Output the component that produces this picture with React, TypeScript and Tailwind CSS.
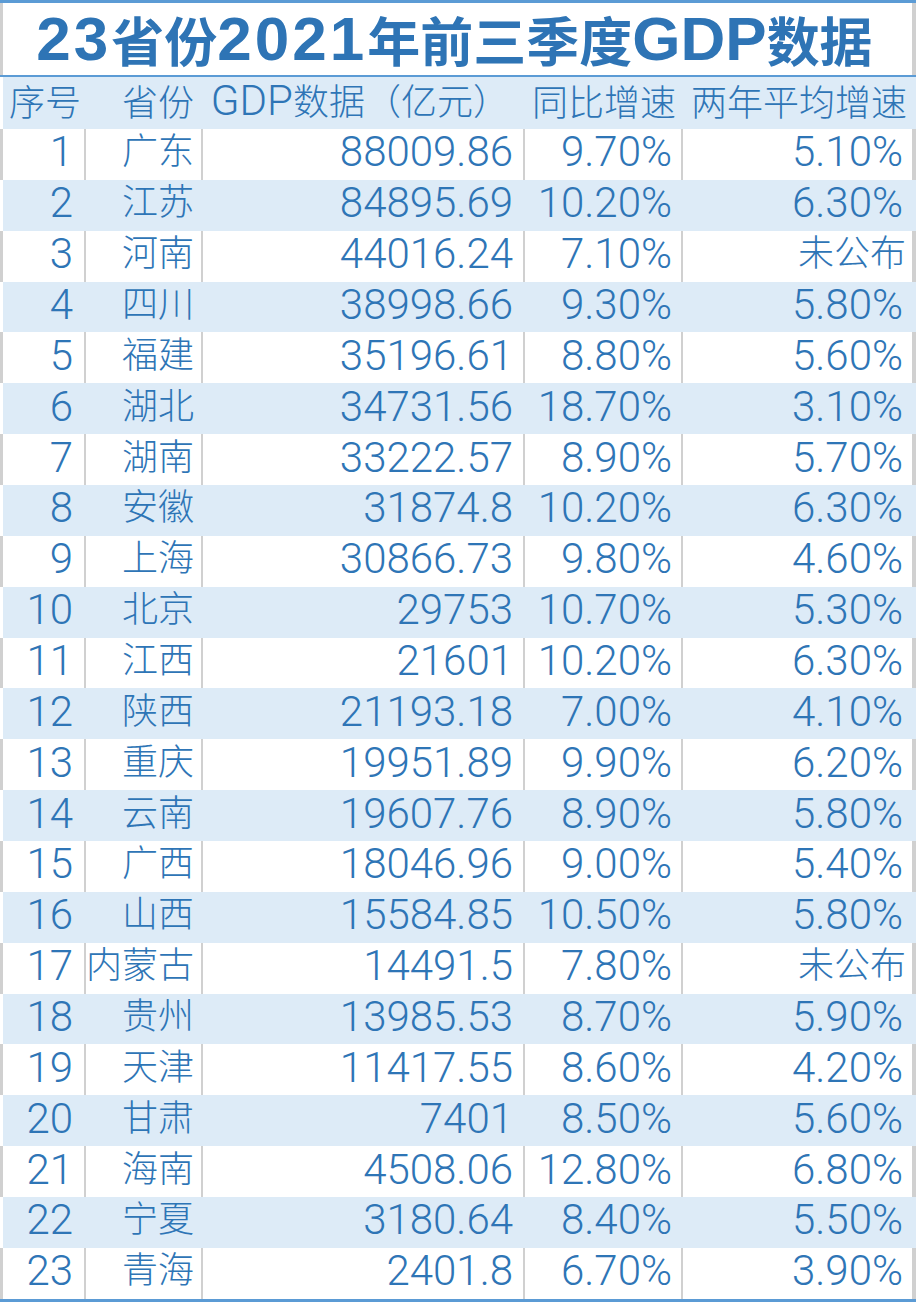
import React from "react";

type Row = [string, string, string, string, string];

const rows: Row[] = [
  ["1", "广东", "88009.86", "9.70%", "5.10%"],
  ["2", "江苏", "84895.69", "10.20%", "6.30%"],
  ["3", "河南", "44016.24", "7.10%", "未公布"],
  ["4", "四川", "38998.66", "9.30%", "5.80%"],
  ["5", "福建", "35196.61", "8.80%", "5.60%"],
  ["6", "湖北", "34731.56", "18.70%", "3.10%"],
  ["7", "湖南", "33222.57", "8.90%", "5.70%"],
  ["8", "安徽", "31874.8", "10.20%", "6.30%"],
  ["9", "上海", "30866.73", "9.80%", "4.60%"],
  ["10", "北京", "29753", "10.70%", "5.30%"],
  ["11", "江西", "21601", "10.20%", "6.30%"],
  ["12", "陕西", "21193.18", "7.00%", "4.10%"],
  ["13", "重庆", "19951.89", "9.90%", "6.20%"],
  ["14", "云南", "19607.76", "8.90%", "5.80%"],
  ["15", "广西", "18046.96", "9.00%", "5.40%"],
  ["16", "山西", "15584.85", "10.50%", "5.80%"],
  ["17", "内蒙古", "14491.5", "7.80%", "未公布"],
  ["18", "贵州", "13985.53", "8.70%", "5.90%"],
  ["19", "天津", "11417.55", "8.60%", "4.20%"],
  ["20", "甘肃", "7401", "8.50%", "5.60%"],
  ["21", "海南", "4508.06", "12.80%", "6.80%"],
  ["22", "宁夏", "3180.64", "8.40%", "5.50%"],
  ["23", "青海", "2401.8", "6.70%", "3.90%"],
];

const Num = ({ children }: { children: React.ReactNode }) => (
  <span className="font-['Roboto','Liberation_Sans',sans-serif] font-light text-[42px] leading-none">
    {children}
  </span>
);

const Cjk = ({ children }: { children: React.ReactNode }) => (
  <span className="font-['Noto_Sans_CJK_SC',sans-serif] font-light text-[36px] leading-none">
    {children}
  </span>
);

const isCjk = (s: string) => /[\u4e00-\u9fff]/.test(s);

function DataRow({ r, blue }: { r: Row; blue: boolean }) {
  const line = blue ? "border-transparent" : "border-[#d0d0d0]";
  const cjk5 = isCjk(r[4]);
  return (
    <div className="flex h-[50.87px]">
      <div className={`w-[3px] shrink-0 ${blue ? "bg-white" : "bg-[#d0d0d0]"}`} />
      <div className={`flex flex-1 ${blue ? "bg-[#ddebf7]" : "bg-white"}`}>
        <div className="w-[81px] flex items-center justify-end pr-[11px] pb-[4px]">
          <Num>{r[0]}</Num>
        </div>
        <div className={`w-[117px] border-l-2 ${line} flex items-center justify-end pr-[7px] pb-[12px]`}>
          <Cjk>{r[1]}</Cjk>
        </div>
        <div className={`w-[322px] border-l-2 ${line} flex items-center justify-end pr-[10px] pb-[4px]`}>
          <Num>{r[2]}</Num>
        </div>
        <div className={`w-[158px] border-l-2 ${line} flex items-center justify-end pr-[9px] pb-[4px]`}>
          <Num>{r[3]}</Num>
        </div>
        {cjk5 ? (
          <div className={`w-[231px] border-l-2 ${line} flex items-center justify-end pr-[6px] pb-[12px]`}>
            <Cjk>{r[4]}</Cjk>
          </div>
        ) : (
          <div className={`w-[231px] border-l-2 ${line} flex items-center justify-end pr-[9px] pb-[4px]`}>
            <Num>{r[4]}</Num>
          </div>
        )}
        <div className={`w-[4px] ${blue ? "bg-[#ddebf7]" : "bg-[#d0d0d0]"}`} />
      </div>
    </div>
  );
}

export default function App() {
  return (
    <div className="w-[916px] h-[1302px] bg-white text-[#2e75b6] overflow-hidden">
      <div className="h-[3px] bg-[#5b9bd5]" />
      <div className="h-[72px] flex">
        <div className="w-[3px] bg-[#d0d0d0]" />
        <div className="flex-1 flex items-center justify-center text-[#2e74b5] font-bold leading-none pr-[6px]">
          <span className="font-['Liberation_Sans',sans-serif] text-[62px] tracking-[3px]">23</span>
          <span className="font-['Noto_Sans_CJK_SC',sans-serif] text-[53px]">省份</span>
          <span className="font-['Liberation_Sans',sans-serif] text-[62px] tracking-[3px]">2021</span>
          <span className="font-['Noto_Sans_CJK_SC',sans-serif] text-[53px]">年前三季度</span>
          <span className="font-['Liberation_Sans',sans-serif] text-[62px]">GDP</span>
          <span className="font-['Noto_Sans_CJK_SC',sans-serif] text-[53px]">数据</span>
        </div>
        <div className="w-[4px] bg-[#d0d0d0]" />
      </div>
      <div className="h-[2px] bg-[#5b9bd5]" />
      <div className="flex h-[52px]">
        <div className="w-[3px] bg-white" />
        <div className="flex flex-1 bg-[#ddebf7]">
          <div className="w-[81px] flex items-center justify-end pr-[3px] pb-[6px]">
            <Cjk>序号</Cjk>
          </div>
          <div className="w-[117px] flex items-center justify-end pr-[7px] pb-[6px]">
            <Cjk>省份</Cjk>
          </div>
          <div className="w-[322px] flex items-center justify-end pr-[14px] pb-[4px]">
            <span className="leading-none whitespace-nowrap">
              <Num>GDP</Num>
              <Cjk>数据（亿元）</Cjk>
            </span>
          </div>
          <div className="w-[158px] flex items-center justify-end pr-[5px] pb-[6px]">
            <Cjk>同比增速</Cjk>
          </div>
          <div className="w-[231px] flex items-center justify-end pr-[5px] pb-[6px]">
            <Cjk>两年平均增速</Cjk>
          </div>
          <div className="w-[4px]" />
        </div>
      </div>
      {rows.map((r, i) => (
        <DataRow key={r[0]} r={r} blue={i % 2 === 1} />
      ))}
      <div className="h-[3px] bg-[#5b9bd5]" />
    </div>
  );
}
